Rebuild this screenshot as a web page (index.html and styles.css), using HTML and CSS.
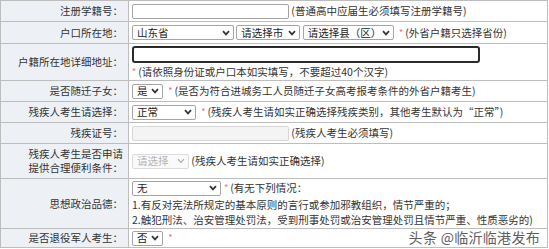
FILE: index.html
```html
<!DOCTYPE html>
<html lang="zh-CN">
<head>
    <meta charset="UTF-8">
    <meta name="viewport" content="width=device-width, initial-scale=1.0">
    <title>考生信息</title>
    <link rel="stylesheet" href="styles.css">
</head>
<body>
    <main class="page">
        <table class="form">
            <tr class="r21">
                <td class="label">注册学籍号：</td>
                <td class="field">
                    <span class="input w-156"></span>
                    <span class="tip">(普通高中应届生必须填写注册学籍号)</span>
                </td>
            </tr>
            <tr class="r22">
                <td class="label">户口所在地：</td>
                <td class="field">
                    <span class="sel w-101"><span>山东省</span><svg class="chev" viewBox="0 0 8 6"><path d="M1 1.2 L4 4.4 L7 1.2"/></svg></span>
                    <span class="sel w-64"><span>请选择市</span><svg class="chev" viewBox="0 0 8 6"><path d="M1 1.2 L4 4.4 L7 1.2"/></svg></span>
                    <span class="sel w-90"><span>请选择县（区）</span><svg class="chev" viewBox="0 0 8 6"><path d="M1 1.2 L4 4.4 L7 1.2"/></svg></span>
                    <span class="star">*</span><span class="tip">(外省户籍只选择省份)</span>
                </td>
            </tr>
            <tr class="r37">
                <td class="label">户籍所在地详细地址：</td>
                <td class="field">
                    <div class="line"><span class="input focus w-347"></span></div>
                    <div class="line"><span class="star">*</span><span class="tip">(请依照身份证或户口本如实填写，不要超过40个汉字)</span></div>
                </td>
            </tr>
            <tr class="r21">
                <td class="label">是否随迁子女：</td>
                <td class="field">
                    <span class="sel w-30"><span>是</span><svg class="chev" viewBox="0 0 8 6"><path d="M1 1.2 L4 4.4 L7 1.2"/></svg></span>
                    <span class="star">*</span><span class="tip">(是否为符合进城务工人员随迁子女高考报考条件的外省户籍考生)</span>
                </td>
            </tr>
            <tr class="r21">
                <td class="label">残疾人考生请选择：</td>
                <td class="field">
                    <span class="sel w-63"><span>正常</span><svg class="chev" viewBox="0 0 8 6"><path d="M1 1.2 L4 4.4 L7 1.2"/></svg></span>
                    <span class="star">*</span><span class="tip">(残疾人考生请如实正确选择残疾类别，其他考生默认为“正常”)</span>
                </td>
            </tr>
            <tr class="r21">
                <td class="label">残疾证号：</td>
                <td class="field">
                    <span class="input off w-156"></span>
                    <span class="tip">(残疾人考生必须填写)</span>
                </td>
            </tr>
            <tr class="r35">
                <td class="label">残疾人考生是否申请<br>提供合理便利条件：</td>
                <td class="field">
                    <span class="sel off w-56"><span>请选择</span><svg class="chev" viewBox="0 0 8 6"><path d="M1 1.2 L4 4.4 L7 1.2"/></svg></span>
                    <span class="tip">(残疾人考生请如实正确选择)</span>
                </td>
            </tr>
            <tr class="r50">
                <td class="label">思想政治品德：</td>
                <td class="field">
                    <div class="line first">
                        <span class="sel w-88"><span>无</span><svg class="chev" viewBox="0 0 8 6"><path d="M1 1.2 L4 4.4 L7 1.2"/></svg></span>
                        <span class="star">*</span><span class="tip">(有无下列情况：</span>
                    </div>
                    <div class="line">1.有反对宪法所规定的基本原则的言行或参加邪教组织，情节严重的；</div>
                    <div class="line">2.触犯刑法、治安管理处罚法，受到刑事处罚或治安管理处罚且情节严重、性质恶劣的)</div>
                </td>
            </tr>
            <tr class="r19">
                <td class="label">是否退役军人考生：</td>
                <td class="field">
                    <span class="sel w-30"><span>否</span><svg class="chev" viewBox="0 0 8 6"><path d="M1 1.2 L4 4.4 L7 1.2"/></svg></span>
                    <span class="star">*</span>
                </td>
            </tr>
        </table>
        <div class="mark">头条 @临沂临港发布</div>
    </main>
</body>
</html>
```

FILE: styles.css
```css
* {
    margin: 0;
    padding: 0;
    box-sizing: border-box;
}

body {
    background-color: #fff;
    font-family: "Noto Sans CJK SC", "Noto Sans", sans-serif;
    font-size: 10.5px;
    color: #333;
}

.page {
    position: relative;
    width: 549px;
    height: 249px;
    overflow: hidden;
}

.form {
    width: 548px;
    border-collapse: collapse;
}

.form td {
    border: 1px solid #bdbdbd;
    vertical-align: middle;
    line-height: 14px;
}

.label {
    width: 128px;
    padding-right: 5px;
    text-align: right;
    background-color: #edf1f6;
}

.field {
    padding-left: 3px;
    white-space: nowrap;
}

.r21 td { height: 21px; }
.r22 td { height: 22px; }
.r37 td { height: 37px; }
.r35 td { height: 35px; }
.r50 td { height: 50px; }
.r19 td { height: 19px; }

.line {
    display: flex;
    align-items: center;
    height: 15px;
}

.r37 .line:first-child {
    height: 19px;
}

.r50 .line.first {
    height: 17px;
    margin-bottom: 1px;
}

.input, .sel {
    display: inline-flex;
    align-items: center;
    vertical-align: middle;
    height: 15px;
    border: 1px solid #a5a5a5;
    border-radius: 2px;
    background-color: #fff;
}

.input.focus {
    height: 17px;
    border: 2px solid #2b2b2b;
    border-radius: 3px;
}

.input.off {
    border-color: #d6d6d6;
    background-color: #f4f4f4;
}

.sel {
    justify-content: space-between;
    padding: 0 3px 0 4px;
    color: #222;
}

.sel.off {
    color: #b4b4b4;
    border-color: #dcdcdc;
    background-color: #fafafa;
}

.chev {
    width: 8px;
    height: 6px;
    fill: none;
    stroke: #333;
    stroke-width: 1.7;
}

.sel.off .chev {
    stroke: #aaa;
    stroke-width: 1.1;
}

.w-30 { width: 31px; }
.w-56 { width: 57px; }
.w-63 { width: 64px; }
.w-64 { width: 64px; }
.w-88 { width: 89px; }
.w-90 { width: 91px; }
.w-101 { width: 102px; }
.w-156 { width: 157px; }
.w-347 { width: 348px; }

.tip {
    vertical-align: middle;
}

.star {
    display: inline-block;
    vertical-align: middle;
    margin: 0 2px 0 3px;
    color: #f06b78;
    font-size: 9px;
}

.line .star:first-child {
    margin-left: 0;
}

.mark {
    position: absolute;
    right: 9px;
    bottom: 2px;
    font-size: 14px;
    letter-spacing: 0.3px;
    color: #5e5e5e;
    text-shadow: 0 0 2px #fff, 0 0 2px #fff;
}
```
